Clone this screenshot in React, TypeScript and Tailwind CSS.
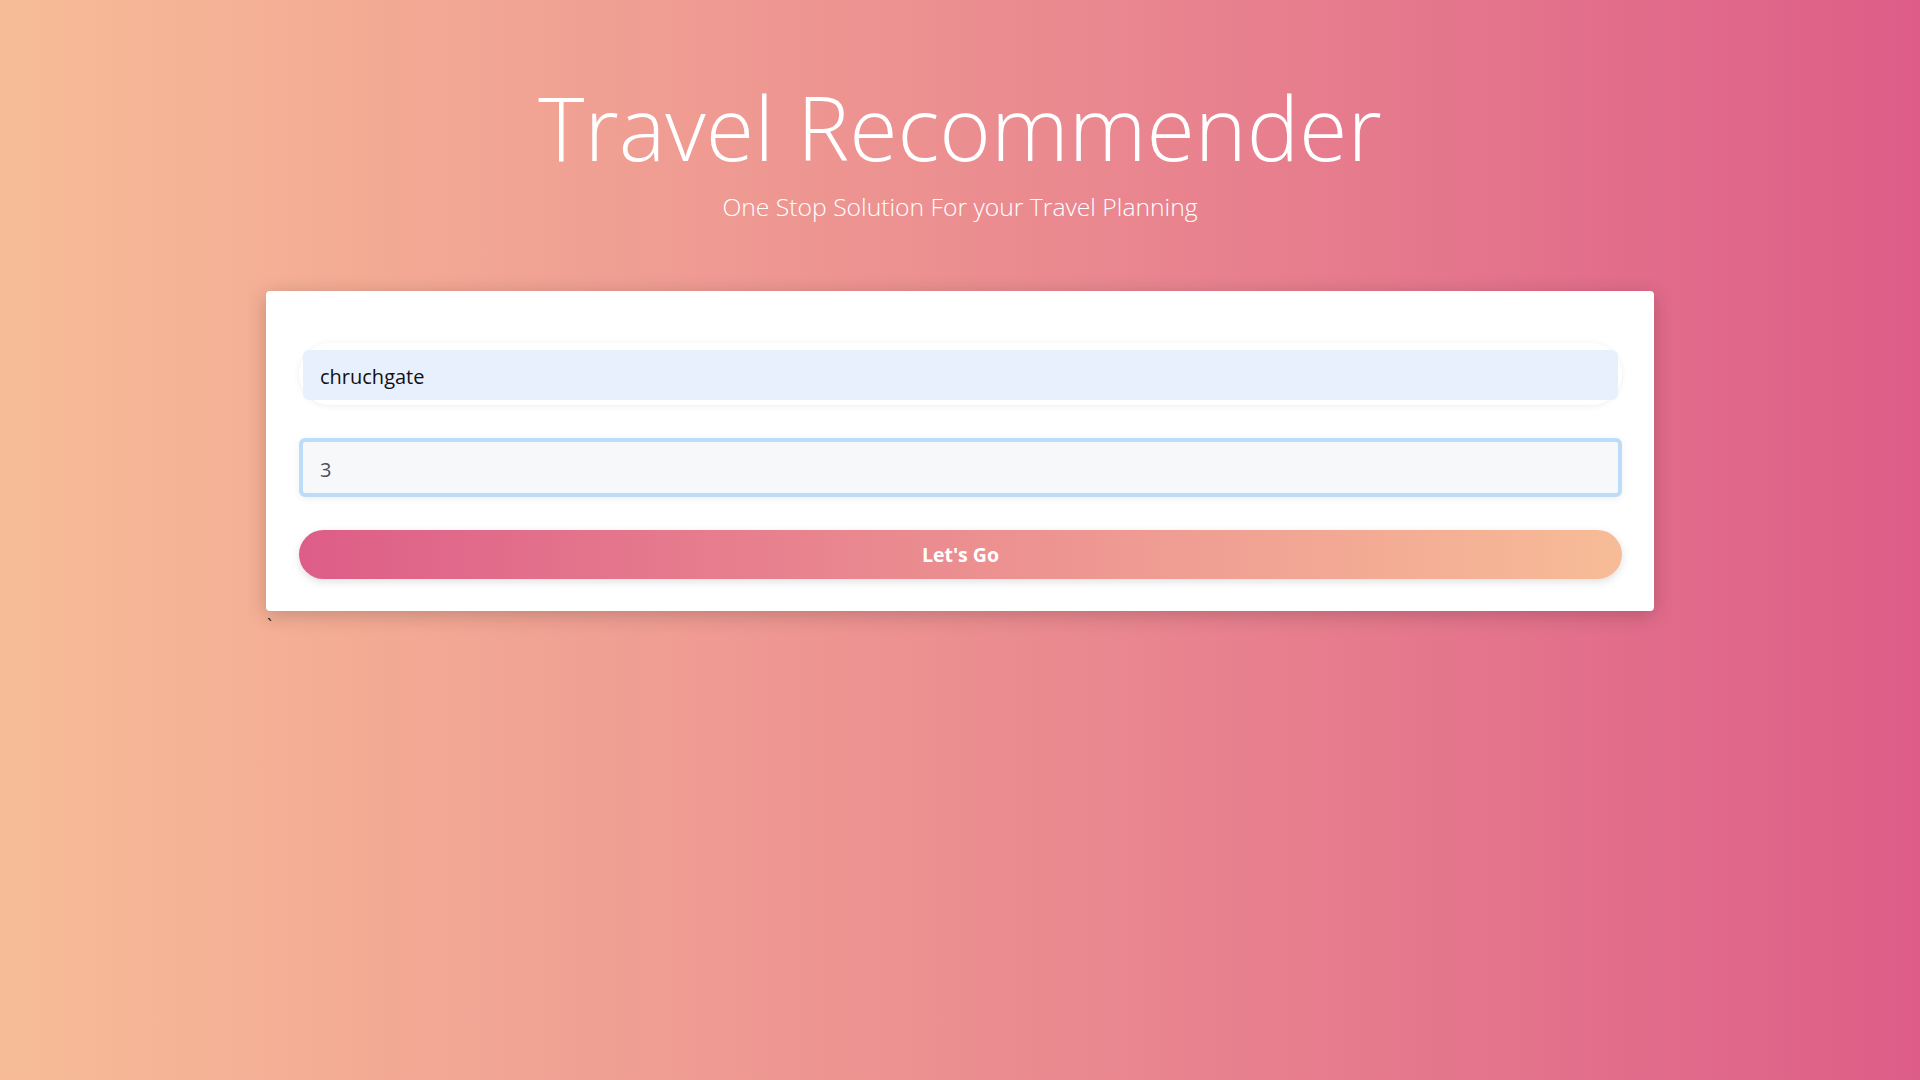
import React from 'react'

export default function App() {
  return (
    <div className="min-h-screen w-full bg-gradient-to-r from-[#f7bc97] to-[#dd5d88] font-['Open_Sans',sans-serif]">
      {/* Heading */}
      <header className="pt-[75px] text-center text-white">
        <h1 className="text-[88px] font-light leading-[1.2]">Travel Recommender</h1>
        <p className="mt-[10px] text-[24.7px] font-light leading-8">One Stop Solution For your Travel Planning</p>
      </header>

      {/* Search card */}
      <div className="mx-auto mt-[68px] w-[1388px] rounded bg-white pt-[52px] pb-8 pl-[33px] pr-8 shadow-[0_4px_20px_rgba(0,0,0,0.2)]">
        <div className="rounded-full px-1 pt-[7px] pb-[5px] shadow-[0_1px_6px_rgba(0,0,0,0.07)]">
          <input
            readOnly
            value="chruchgate"
            className="h-[50px] w-full rounded-md bg-[#e8f0fe] pt-[4px] pl-[17px] text-[20px] text-[#111] outline-none"
          />
        </div>

        <input
          readOnly
          value="3"
          className="mt-[33px] h-[59px] w-full rounded-md border-4 border-[#bcdcfa] bg-[#f7f8fa] pt-[4px] pl-[17px] text-[20px] text-[#495057] outline-none shadow-[0_2px_8px_rgba(0,0,0,0.06)]"
        />

        <button className="mt-[33px] h-[49px] w-full rounded-full bg-gradient-to-r from-[#dd5d88] to-[#f7bc97] pt-[2px] text-[19.5px] font-bold text-white shadow-[0_3px_8px_rgba(0,0,0,0.12)]">
          Let's Go
        </button>
      </div>
      <div className="mx-auto w-[1388px] pt-[4px] pl-[1px] text-lg leading-5 text-[#222]">`</div>
    </div>
  )
}
